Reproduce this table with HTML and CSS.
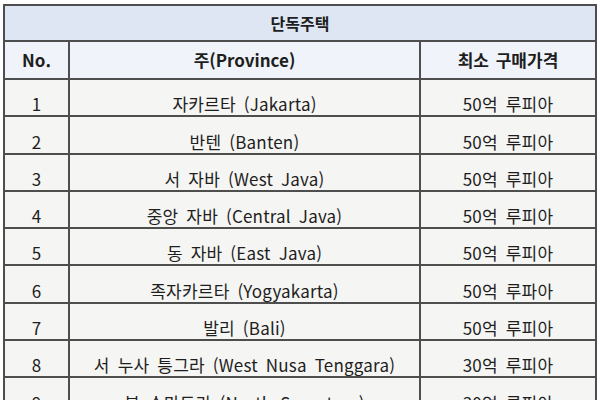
FILE: index.html
```html
<!DOCTYPE html>
<html lang="ko">
<head>
<meta charset="utf-8">
<link rel="stylesheet" href="styles.css">
</head>
<body>
<div class="wrap">
<table class="price">
  <colgroup><col class="c-no"><col class="c-prov"><col class="c-price"></colgroup>
  <thead>
    <tr class="h1"><th colspan="3">단독주택</th></tr>
    <tr class="h2"><th>No.</th><th>주(Province)</th><th>최소 구매가격</th></tr>
  </thead>
  <tbody>
    <tr><td>1</td><td>자카르타 (Jakarta)</td><td>50억 루피아</td></tr>
    <tr><td>2</td><td>반텐 (Banten)</td><td>50억 루피아</td></tr>
    <tr><td>3</td><td>서 자바 (West Java)</td><td>50억 루피아</td></tr>
    <tr><td>4</td><td>중앙 자바 (Central Java)</td><td>50억 루피아</td></tr>
    <tr><td>5</td><td>동 자바 (East Java)</td><td>50억 루피아</td></tr>
    <tr><td>6</td><td>족자카르타 (Yogyakarta)</td><td>50억 루파아</td></tr>
    <tr><td>7</td><td>발리 (Bali)</td><td>50억 루피아</td></tr>
    <tr><td>8</td><td>서 누사 틍그라 (West Nusa Tenggara)</td><td>30억 루피아</td></tr>
    <tr><td>9</td><td>북 수마트라 (North Sumatera)</td><td>30억 루피아</td></tr>
  </tbody>
</table>
</div>
</body>
</html>
```

FILE: styles.css
```css
html, body {
  margin: 0;
  padding: 0;
  background: #ffffff;
  overflow: hidden;
}
.wrap {
  padding: 4px 0 0 3px;
}
.price {
  border-collapse: collapse;
  table-layout: fixed;
  width: 592px;
  font-family: "Noto Sans CJK KR", "Noto Sans", sans-serif;
  font-size: 17px;
  color: #1e1e1e;
}
.c-no { width: 65px; }
.c-prov { width: 351px; }
.c-price { width: 176px; }
.price th, .price td {
  border: 2px solid #4e4e4e;
  text-align: center;
  padding: 0;
}
.price th {
  font-weight: 700;
  vertical-align: middle;
  line-height: 22px;
  word-spacing: 2px;
}
.h1 th {
  height: 34px;
  background: #dde6f2;
  font-size: 16px;
}
.h2 th {
  height: 36px;
  background: #f0f3f9;
}
.price td {
  height: 35.3px;
  background: #f5f5f3;
  vertical-align: bottom;
  padding-bottom: 0;
  line-height: 22px;
  letter-spacing: 0.2px;
  word-spacing: 3px;
}
```
